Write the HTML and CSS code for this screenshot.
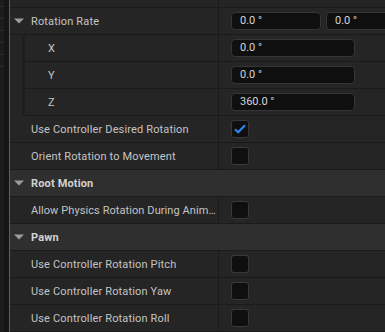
FILE: index.html
```html
<!DOCTYPE html>
<html lang="en">

<head>
    <meta charset="UTF-8">
    <meta name="viewport" content="width=device-width, initial-scale=1.0">
    <title>Details</title>
    <link rel="stylesheet" href="styles.css">
</head>

<body>
    <div class="gutter">
        <span class="tick"></span><span class="tick"></span><span class="tick"></span>
        <span class="tick"></span><span class="tick"></span><span class="tick"></span>
    </div>
    <div class="panel">
        <div class="row top">
            <div class="name"></div>
            <div class="value"></div>
        </div>
        <div class="row">
            <div class="name">
                <svg class="arrow" width="10" height="6" viewBox="0 0 10 6"><path d="M0 0.5h10L5 5.5z" fill="#9c9c9c"/></svg>
                <span>Rotation Rate</span>
            </div>
            <div class="value">
                <div class="input short">0.0 °</div>
                <div class="input short">0.0 °</div>
            </div>
        </div>
        <div class="row sub">
            <div class="indent"></div>
            <div class="name"><span>X</span></div>
            <div class="value"><div class="input">0.0 °</div></div>
        </div>
        <div class="row sub">
            <div class="indent"></div>
            <div class="name"><span>Y</span></div>
            <div class="value"><div class="input">0.0 °</div></div>
        </div>
        <div class="row sub">
            <div class="indent"></div>
            <div class="name"><span>Z</span></div>
            <div class="value"><div class="input">360.0 °</div></div>
        </div>
        <div class="row">
            <div class="name"><span>Use Controller Desired Rotation</span></div>
            <div class="value">
                <div class="check">
                    <svg width="12" height="10" viewBox="0 0 12 10"><path d="M1 5.2l3.2 3L11 1.3" fill="none" stroke="#2a86f0" stroke-width="2.2"/></svg>
                </div>
            </div>
        </div>
        <div class="row">
            <div class="name"><span>Orient Rotation to Movement</span></div>
            <div class="value"><div class="check"></div></div>
        </div>
        <div class="row category">
            <svg class="arrow" width="10" height="6" viewBox="0 0 10 6"><path d="M0 0.5h10L5 5.5z" fill="#9c9c9c"/></svg>
            <span>Root Motion</span>
        </div>
        <div class="row">
            <div class="name"><span class="long">Allow Physics Rotation During Anim Root Motion</span></div>
            <div class="value"><div class="check"></div></div>
        </div>
        <div class="row category">
            <svg class="arrow" width="10" height="6" viewBox="0 0 10 6"><path d="M0 0.5h10L5 5.5z" fill="#9c9c9c"/></svg>
            <span>Pawn</span>
        </div>
        <div class="row">
            <div class="name"><span>Use Controller Rotation Pitch</span></div>
            <div class="value"><div class="check"></div></div>
        </div>
        <div class="row">
            <div class="name"><span>Use Controller Rotation Yaw</span></div>
            <div class="value"><div class="check"></div></div>
        </div>
        <div class="row">
            <div class="name"><span>Use Controller Rotation Roll</span></div>
            <div class="value"><div class="check"></div></div>
        </div>
    </div>
</body>

</html>
```

FILE: styles.css
```css
* {
    margin: 0;
    padding: 0;
    box-sizing: border-box
}

body {
    display: flex;
    width: 385px;
    height: 332px;
    overflow: hidden;
    background: #151515;
    font-family: Roboto, "Liberation Sans", sans-serif;
    font-size: 11px;
    letter-spacing: 0.15px;
    color: #c4c4c4
}

.gutter {
    width: 4px;
    flex: none;
    display: flex;
    flex-direction: column;
    gap: 11px;
    padding-top: 6px;
    background: #1c1c1c;
    margin-right: 5px
}

.tick {
    height: 1px;
    background: #2c2c2c
}

.panel {
    flex: 1;
    border-left: 1px solid #1f6fc6;
    overflow: hidden
}

.row {
    display: flex;
    height: 27px;
    background: #252525;
    border-bottom: 1px solid #1a1a1a
}

.row.top {
    height: 8px
}

.name {
    width: 209px;
    flex: none;
    display: flex;
    align-items: center;
    padding-left: 21px;
    padding-right: 1px;
    border-right: 1px solid #1a1a1a;
    white-space: nowrap;
    overflow: hidden
}

.name span {
    overflow: hidden;
    text-overflow: ellipsis
}

.name .long {
    letter-spacing: 0.08px
}

.name .arrow {
    margin-left: -17px;
    margin-right: 7px;
    flex: none
}

.sub .indent {
    width: 15px;
    flex: none;
    background: #252525;
    border-right: 3px solid #1e1e1e;
    margin-bottom: -1px
}

.sub .name {
    width: 194px;
    padding-left: 23px
}

.value {
    flex: 1;
    display: flex;
    align-items: center;
    gap: 5px;
    padding-left: 12px;
    white-space: nowrap;
    overflow: hidden
}

.input {
    flex: none;
    width: 124px;
    height: 18px;
    line-height: 16px;
    padding-left: 8px;
    background: #0f0f0f;
    border: 1px solid #363636;
    border-radius: 4px;
    color: #d6d6d6;
    letter-spacing: 0
}

.input.short {
    width: 90px
}

.check {
    width: 18px;
    height: 18px;
    flex: none;
    display: flex;
    align-items: center;
    justify-content: center;
    background: #0f0f0f;
    border: 1px solid #383838;
    border-radius: 3px
}

.category {
    align-items: center;
    background: #2f2f2f;
    padding-left: 4px;
    font-weight: bold;
    color: #d2d2d2
}

.category .arrow {
    margin-right: 7px
}
```
